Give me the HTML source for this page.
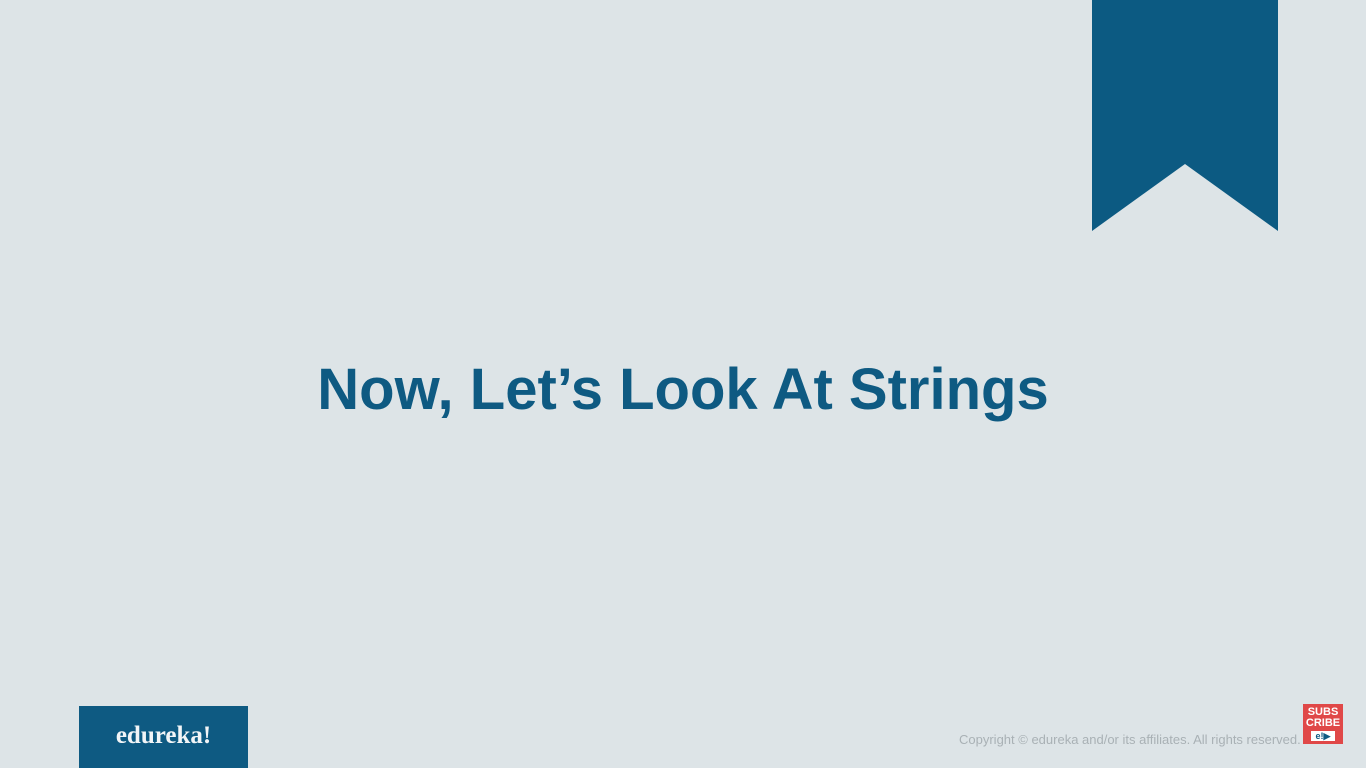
<!DOCTYPE html>
<html><head><style>
html,body{margin:0;padding:0}
body{width:1366px;height:768px;background:#dde4e7;position:relative;overflow:hidden;font-family:"Liberation Sans",sans-serif}
.title{position:absolute;left:0;width:1366px;top:356px;text-align:center;font-size:58px;font-weight:bold;color:#0e5a82;letter-spacing:0}
.logo{position:absolute;left:79px;top:706px;width:169px;height:62px;background:#0e5a82;color:#f2f5f7;font-family:"Liberation Serif",serif;font-weight:bold;font-size:25px;text-align:center;line-height:60px}
.copy{position:absolute;left:959px;top:732px;font-size:13px;color:#a9b1b5;white-space:nowrap}
.sub{position:absolute;left:1303px;top:704px;width:40px;height:40px;background:#e04848;color:#fff;font-size:11px;font-weight:bold;line-height:11px;text-align:center}
</style></head><body>
<svg style="position:absolute;left:1092px;top:0" width="186" height="232"><polygon points="0,0 186,0 186,231 93,164 0,231" fill="#0c5a82"/></svg>
<div class="title">Now, Let’s Look At Strings</div>
<div class="logo">edureka!</div>
<div class="copy">Copyright © edureka and/or its affiliates. All rights reserved.</div>
<div class="sub"><div style="margin-top:3px">SUBS</div><div>CRIBE</div><div style="margin:2px auto 0;width:24px;height:10px;background:#fff;color:#0e5a82;font-size:9px;line-height:10px">e!▶</div></div>
</body></html>
